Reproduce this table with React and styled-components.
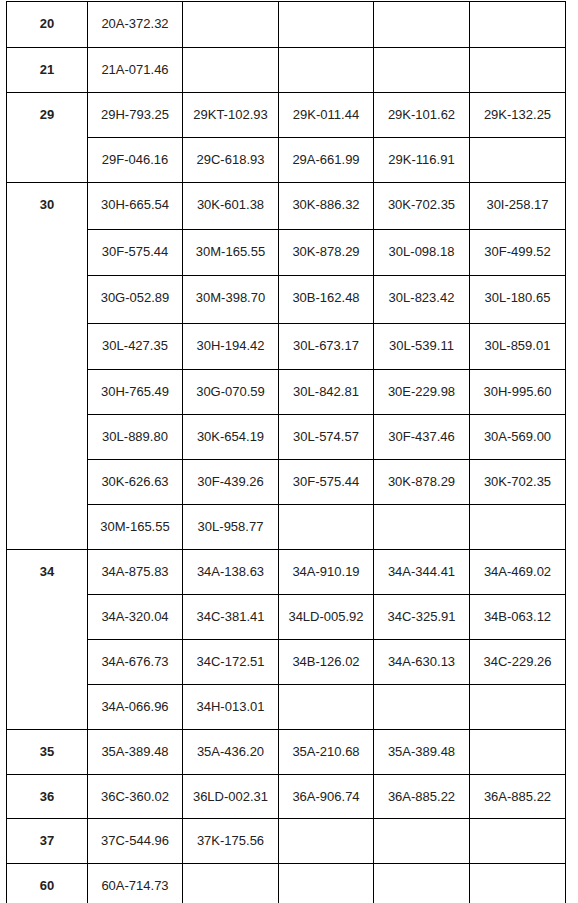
import styled, {createGlobalStyle} from "styled-components";

const GlobalStyle = createGlobalStyle`
  html, body {
    margin: 0;
    padding: 0;
    background: #fff;
  }
  body {
    font-family: "Liberation Sans", Arial, sans-serif;
  }
`;

const Page = styled.div`
  padding: 1px 0 0 6px;
`;

const Table = styled.table`
  border-collapse: collapse;
  table-layout: fixed;
  width: 559px;
  font-family: "Liberation Sans", Arial, sans-serif;
  font-size: 13px;
  color: #222;
`;

const Row = styled.tr`
  height: ${props => props.$h}px;
`;

const Cell = styled.td`
  border: 1px solid #000;
  padding: 14px 0 0;
  box-sizing: border-box;
  vertical-align: top;
  text-align: center;
  line-height: 15px;
  font-weight: ${props => (props.$bold ? 700 : 400)};
  white-space: nowrap;
`;

const groups = [
    {code: "20", heights: [46], rows: [["20A-372.32"]]},
    {code: "21", heights: [45], rows: [["21A-071.46"]]},
    {
        code: "29", heights: [45, 45], rows: [
            ["29H-793.25", "29KT-102.93", "29K-011.44", "29K-101.62", "29K-132.25"],
            ["29F-046.16", "29C-618.93", "29A-661.99", "29K-116.91"],
        ]
    },
    {
        code: "30", heights: [47, 46, 48, 46, 45, 45, 45, 45], rows: [
            ["30H-665.54", "30K-601.38", "30K-886.32", "30K-702.35", "30I-258.17"],
            ["30F-575.44", "30M-165.55", "30K-878.29", "30L-098.18", "30F-499.52"],
            ["30G-052.89", "30M-398.70", "30B-162.48", "30L-823.42", "30L-180.65"],
            ["30L-427.35", "30H-194.42", "30L-673.17", "30L-539.11", "30L-859.01"],
            ["30H-765.49", "30G-070.59", "30L-842.81", "30E-229.98", "30H-995.60"],
            ["30L-889.80", "30K-654.19", "30L-574.57", "30F-437.46", "30A-569.00"],
            ["30K-626.63", "30F-439.26", "30F-575.44", "30K-878.29", "30K-702.35"],
            ["30M-165.55", "30L-958.77"],
        ]
    },
    {
        code: "34", heights: [45, 45, 45, 45], rows: [
            ["34A-875.83", "34A-138.63", "34A-910.19", "34A-344.41", "34A-469.02"],
            ["34A-320.04", "34C-381.41", "34LD-005.92", "34C-325.91", "34B-063.12"],
            ["34A-676.73", "34C-172.51", "34B-126.02", "34A-630.13", "34C-229.26"],
            ["34A-066.96", "34H-013.01"],
        ]
    },
    {code: "35", heights: [45], rows: [["35A-389.48", "35A-436.20", "35A-210.68", "35A-389.48"]]},
    {code: "36", heights: [44], rows: [["36C-360.02", "36LD-002.31", "36A-906.74", "36A-885.22", "36A-885.22"]]},
    {code: "37", heights: [45], rows: [["37C-544.96", "37K-175.56"]]},
    {code: "60", heights: [45], rows: [["60A-714.73"]]},
];

const widths = [81, 95, 96, 95, 96, 96];

const App = () => {
    return (
        <Page>
            <GlobalStyle/>
            <Table>
                <colgroup>
                    {widths.map((w, i) => <col key={i} style={{width: w}}/>)}
                </colgroup>
                <tbody>
                {groups.map(g =>
                    g.rows.map((row, ri) => {
                        const cells = [0, 1, 2, 3, 4].map(i => row[i] || "");
                        return (
                            <Row key={g.code + "-" + ri} $h={g.heights[ri]}>
                                {ri === 0 && (
                                    <Cell $bold rowSpan={g.rows.length}>{g.code}</Cell>
                                )}
                                {cells.map((c, ci) => (
                                    <Cell key={ci}>{c}</Cell>
                                ))}
                            </Row>
                        );
                    })
                )}
                </tbody>
            </Table>
        </Page>
    );
};

export default App;
